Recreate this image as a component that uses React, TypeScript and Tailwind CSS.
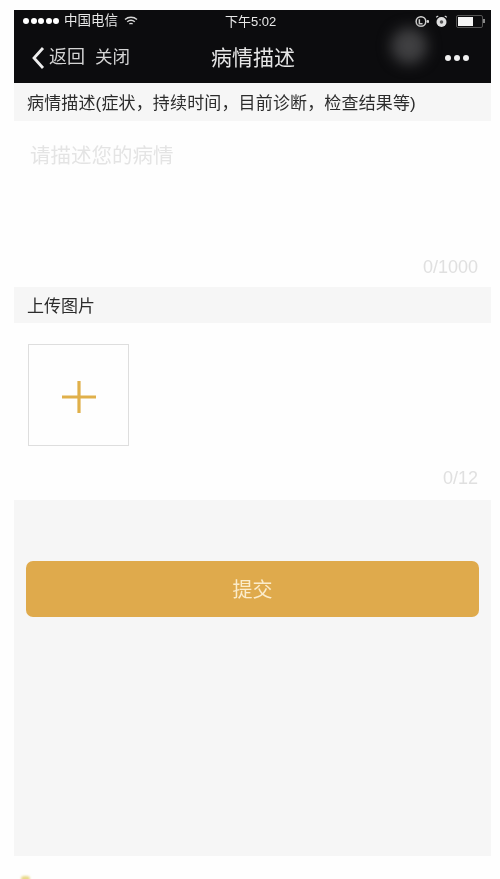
const COMMA = "\uFF0C";

export default function App() {
  const font = { fontFamily: '"Liberation Sans", "Noto Sans CJK SC", sans-serif' };
  return (
    <div style={font} className="relative h-[879px] w-[500px] overflow-hidden bg-[#fefefe]">
      <div className="flex h-full w-full flex-col pl-[14px] pr-[9px] pt-[10px] blur-[0.6px]">
        <header className="relative h-[73px] shrink-0 overflow-hidden bg-[#0c0c0e] text-[#e8e8e8]">
          <div className="flex h-[22px] items-center pl-[9px] pr-[6px]">
            <div className="flex w-[202px] items-center">
              <div className="flex gap-[1.5px]">
                <span className="h-[6px] w-[6px] rounded-full bg-white" />
                <span className="h-[6px] w-[6px] rounded-full bg-white" />
                <span className="h-[6px] w-[6px] rounded-full bg-white" />
                <span className="h-[6px] w-[6px] rounded-full bg-white" />
                <span className="h-[6px] w-[6px] rounded-full bg-white" />
              </div>
              <span className="ml-[5px] text-[13.5px] leading-none">中国电信</span>
              <svg className="ml-[6px]" width="14" height="11" viewBox="0 0 14 11" fill="none" stroke="#d8d8d8" strokeWidth="1.4">
                <path d="M1 3.5c3.4-3 8.6-3 12 0" />
                <path d="M3.2 5.8c2.2-1.9 5.4-1.9 7.6 0" />
                <path d="M5.4 8c1-.8 2.2-.8 3.2 0" />
              </svg>
            </div>
            <span className="text-[13px] leading-none">下午5:02</span>
            <div className="ml-auto flex items-center">
              <svg width="15" height="15" viewBox="0 0 14 14" fill="none" stroke="#d8d8d8" strokeWidth="1.4">
                <circle cx="6.5" cy="7" r="4.5" />
                <path d="M5 4.8v4.2h3" />
                <circle cx="13" cy="7" r=".6" fill="#d8d8d8" />
              </svg>
              <svg className="ml-[6px]" width="13" height="13" viewBox="0 0 12 12">
                <circle cx="6" cy="6.5" r="4.6" fill="#e0e0e0" />
                <circle cx="6" cy="6.5" r="1.6" fill="#555" />
                <path d="M1 2l2-1M11 2L9 1" stroke="#e0e0e0" strokeWidth="1" />
              </svg>
              <div className="ml-[8px] flex h-[13px] w-[27px] items-stretch rounded-[2px] border border-[#555] p-[1px]">
                <div className="w-[15px] bg-[#f5f5f5]" />
              </div>
              <span className="h-[4px] w-[2px] bg-[#888]" />
            </div>
          </div>
          <div className="relative flex h-[51px] items-center pl-[17px] pr-[22px]">
            <svg width="14" height="24" viewBox="0 0 14 24" fill="none" stroke="#ededed" strokeWidth="2.8">
              <path d="M12 2L3 12l9 10" />
            </svg>
            <span className="ml-[4px] text-[18px] text-[#d4d4d4]">返回</span>
            <span className="ml-[10px] text-[17.5px] text-[#d4d4d4]">关闭</span>
            <span className="absolute left-[197px] text-[21px] text-[#e6e6e6]">病情描述</span>
            <div className="ml-auto flex gap-[3px]">
              <span className="h-[6px] w-[6px] rounded-full bg-[#f0f0f0]" />
              <span className="h-[6px] w-[6px] rounded-full bg-[#f0f0f0]" />
              <span className="h-[6px] w-[6px] rounded-full bg-[#f0f0f0]" />
            </div>
          </div>
          <div className="absolute left-[377px] top-[18px] h-[36px] w-[36px] rounded-full bg-[#404042] blur-[7px]" />
        </header>

        <div className="flex h-[38px] shrink-0 items-center whitespace-pre bg-[#f6f6f6] pl-[13px] pt-[3px] text-[17px] tracking-[0.15px] text-[#2c2c2c]">
          {`病情描述(症状${COMMA}持续时间${COMMA}目前诊断${COMMA}检查结果等)`}
        </div>

        <section className="flex h-[166px] shrink-0 flex-col bg-[#fefefe] pl-[16px] pr-[13px]">
          <p className="pt-[22px] text-[20.5px] leading-[26px] text-[#e4e4e4]">请描述您的病情</p>
          <p className="mt-auto pb-[10px] text-right text-[18px] leading-[20px] text-[#e0e0e0]">0/1000</p>
        </section>

        <div className="flex h-[36px] shrink-0 items-center bg-[#f6f6f6] pl-[13px] pt-[3px] text-[17px] text-[#2c2c2c]">上传图片</div>

        <section className="flex h-[177px] shrink-0 flex-col bg-[#fefefe] pl-[14px] pr-[13px]">
          <div className="mt-[21px] flex h-[102px] w-[101px] items-center justify-center border border-[#dedede] pt-[4px]">
            <svg width="34" height="34" viewBox="0 0 34 34" stroke="#e0b04a" strokeWidth="3.2">
              <path d="M17 1v32M0 17h34" />
            </svg>
          </div>
          <p className="mt-auto pb-[12px] text-right text-[18px] leading-[20px] text-[#e0e0e0]">0/12</p>
        </section>

        <section className="h-[356px] shrink-0 bg-[#f6f6f6] px-[12px] pt-[61px]">
          <button className="flex h-[56px] w-[453px] items-center justify-center rounded-[7px] bg-[#dfaa4c] pt-[2px] text-[20px] text-[#fbeccb]">
            提交
          </button>
        </section>
      </div>
      <span className="absolute left-[21px] top-[876px] h-[6px] w-[9px] rounded-full bg-[#e8d98a] blur-[1px]" />
    </div>
  );
}
